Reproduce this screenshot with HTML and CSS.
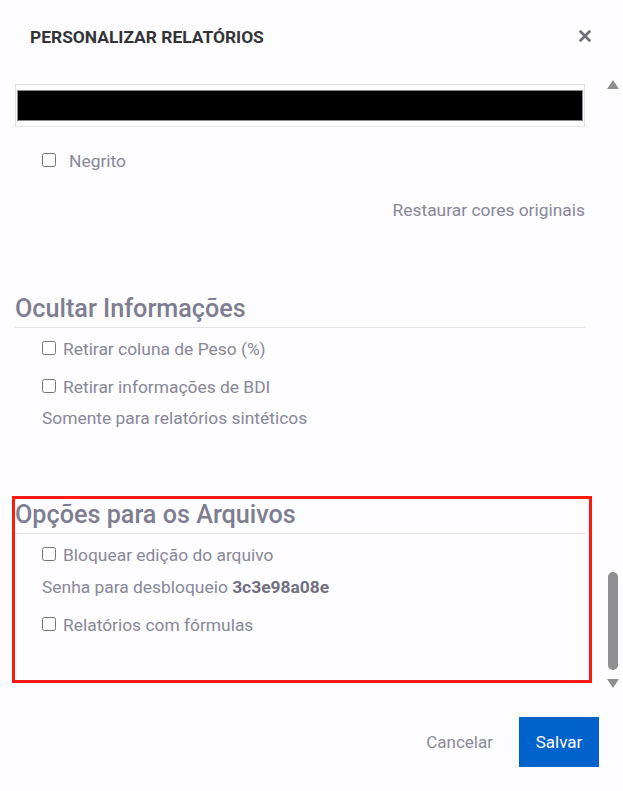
FILE: index.html
```html
<!DOCTYPE html>
<html lang="pt-BR">
<head>
    <meta charset="UTF-8">
    <meta name="viewport" content="width=device-width, initial-scale=1.0">
    <title>Personalizar Relatórios</title>
    <link rel="stylesheet" href="styles.css">
</head>
<body>
    <div class="modal">
        <div class="modal-header">
            <h1 class="modal-title">PERSONALIZAR RELATÓRIOS</h1>
            <button class="close-btn" aria-label="Fechar">
                <svg width="12" height="12" viewBox="0 0 12 12">
                    <path d="M1.5 1.5 L10.5 10.5 M10.5 1.5 L1.5 10.5" stroke="#6e6e76" stroke-width="2.6" stroke-linecap="round"/>
                </svg>
            </button>
        </div>

        <div class="modal-body">
            <div class="content">
                <div class="color-field">
                    <div class="color-bar"></div>
                </div>

                <label class="check-row check-wide">
                    <input type="checkbox">
                    <span>Negrito</span>
                </label>

                <div class="restore">Restaurar cores originais</div>

                <div class="section section-hide">
                    <h2 class="section-title">Ocultar Informações</h2>
                    <label class="check-row first">
                        <input type="checkbox">
                        <span>Retirar coluna de Peso (%)</span>
                    </label>
                    <label class="check-row row-gap">
                        <input type="checkbox">
                        <span>Retirar informações de BDI</span>
                    </label>
                    <p class="note">Somente para relatórios sintéticos</p>
                </div>

                <div class="section section-files">
                    <h2 class="section-title">Opções para os Arquivos</h2>
                    <label class="check-row first">
                        <input type="checkbox">
                        <span>Bloquear edição do arquivo</span>
                    </label>
                    <p class="note note-pass">Senha para desbloqueio <b>3c3e98a08e</b></p>
                    <label class="check-row row-gap">
                        <input type="checkbox">
                        <span>Relatórios com fórmulas</span>
                    </label>
                </div>
            </div>

            <div class="scrollbar">
                <svg class="arrow" width="12" height="9" viewBox="0 0 12 9"><path d="M6 0 L12 9 L0 9 Z" fill="#8e8e93"/></svg>
                <div class="track"></div>
                <div class="thumb"></div>
                <svg class="arrow arrow-down" width="12" height="9" viewBox="0 0 12 9"><path d="M0 0 L12 0 L6 9 Z" fill="#8e8e93"/></svg>
            </div>
        </div>

        <div class="modal-footer">
            <button class="btn-link">Cancelar</button>
            <button class="btn">Salvar</button>
        </div>
    </div>
</body>
</html>
```

FILE: styles.css
```css
body {
    margin: 0;
    padding: 0;
    font-family: Roboto, "Liberation Sans", Arial, sans-serif;
    background-color: #fdfcfe;
    color: #888898;
}
.modal {
    width: 623px;
    height: 791px;
    display: flex;
    flex-direction: column;
    background: #fdfcfe;
}
.modal-header {
    height: 70px;
    box-sizing: border-box;
    padding: 26px 32px 0 30px;
    display: flex;
    justify-content: space-between;
    align-items: flex-start;
}
.modal-title {
    margin: 0;
    font-size: 17.4px;
    line-height: 22px;
    font-weight: 700;
    color: #333338;
}
.close-btn {
    border: none;
    background: none;
    padding: 0;
    margin-top: 4px;
    width: 12px;
    height: 12px;
    display: flex;
    cursor: pointer;
}
.modal-body {
    height: 622px;
    display: flex;
    padding-left: 15px;
}
.content {
    width: 570px;
    flex-shrink: 0;
}
.color-field {
    margin-top: 14px;
    height: 43px;
    box-sizing: border-box;
    border: 1px solid #e2e2e6;
    padding: 5px 1px;
}
.color-bar {
    height: 31px;
    box-sizing: border-box;
    background: #000;
    border: 1px solid #8a8a8a;
}
.check-row {
    display: flex;
    align-items: center;
    gap: 7px;
    padding-left: 27px;
    font-size: 17.4px;
    line-height: 24px;
    cursor: pointer;
}
.check-row input {
    margin: 0 0 2px 0;
    width: 14px;
    height: 14px;
}
.check-wide {
    margin-top: 22px;
    gap: 13px;
}
.restore {
    margin-top: 25px;
    text-align: right;
    font-size: 17.4px;
    line-height: 24px;
}
.section-title {
    margin: 0;
    padding-bottom: 3px;
    font-size: 25.2px;
    line-height: 30px;
    font-weight: 500;
    color: #7e7e90;
    border-bottom: 1px solid #e4e4e8;
}
.section-hide {
    margin-top: 72px;
}
.check-row.first {
    margin-top: 9px;
}
.check-row.row-gap {
    margin-top: 14px;
}
.note {
    margin: 7px 0 0;
    padding-left: 27px;
    font-size: 17.4px;
    line-height: 24px;
}
.note b {
    font-weight: 700;
    color: #707080;
}
.note-pass {
    margin-top: 8px;
}
.section-files {
    margin: 66px -7px 0 -3px;
    padding: 1px 4px 43px 0;
    border: 3px solid #ff1a0e;
}
.scrollbar {
    margin-left: 20px;
    width: 16px;
    display: flex;
    flex-direction: column;
    align-items: center;
}
.arrow {
    margin-top: 10px;
}
.track {
    flex: 1;
}
.thumb {
    width: 10px;
    height: 98px;
    border-radius: 5px;
    background: #8e8e93;
}
.scrollbar .arrow-down {
    margin-top: 9px;
    margin-bottom: 4px;
}
.modal-footer {
    flex: 1;
    display: flex;
    justify-content: flex-end;
    align-items: flex-start;
    padding: 25px 24px 0 0;
    gap: 26px;
}
.btn-link {
    border: none;
    background: none;
    padding: 0;
    height: 50px;
    font-family: inherit;
    font-size: 17px;
    color: #8a8a98;
    cursor: pointer;
}
.btn {
    width: 80px;
    height: 50px;
    border: none;
    background-color: #0063cc;
    color: #fff;
    font-family: inherit;
    font-size: 17px;
    cursor: pointer;
}
```
